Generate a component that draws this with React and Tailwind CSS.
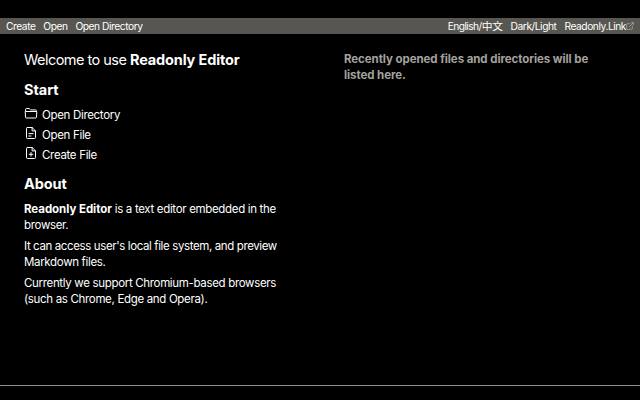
const FolderIcon = () => (
  <svg className="mb-[3px] size-[14px] shrink-0" viewBox="0 0 14 14" fill="none" stroke="currentColor" strokeWidth="1" strokeLinejoin="round">
    <path d="M1.6 4.5V2.4a.9.9 0 0 1 .9-.9h2.6l1.5 1.4h4.9a.9.9 0 0 1 .9.9v.7" />
    <path d="M1.2 4.5h11.6l-.3 5.6a.9.9 0 0 1-.9.9H2.4a.9.9 0 0 1-.9-.9z" />
  </svg>
);

const FileIcon = ({ children }) => (
  <svg className="mb-[4px] size-[14px] shrink-0" viewBox="0 0 14 14" fill="none" stroke="currentColor" strokeWidth="1" strokeLinejoin="round" strokeLinecap="round">
    <path d="M3.4 1.5h4.7l3.4 3.4v6.7a.9.9 0 0 1-.9.9H3.4a.9.9 0 0 1-.9-.9V2.4a.9.9 0 0 1 .9-.9z" />
    <path d="M8.1 1.5v3.4h3.4" />
    {children}
  </svg>
);

const ExternalIcon = () => (
  <svg className="size-[8px] shrink-0 text-[#b5b2ae]" viewBox="0 0 8 8" fill="none" stroke="currentColor" strokeWidth="0.7">
    <path d="M4.3 1.7H1.2a.5.5 0 0 0-.5.5v4.6a.5.5 0 0 0 .5.5h4.6a.5.5 0 0 0 .5-.5V3.7M3 5l4.3-4.3M5 .6h2.4V3" />
  </svg>
);

const Action = ({ icon, children }) => (
  <li className="flex h-5 items-center gap-1">
    {icon}
    <span className="text-[11.5px] leading-5 tracking-[-0.32px]">{children}</span>
  </li>
);

export default function App() {
  return (
    <div className="flex h-[400px] w-[640px] flex-col overflow-hidden bg-black pt-[18px] font-['Inter','Noto_Sans_CJK_SC',sans-serif] whitespace-nowrap text-white">
      <header className="flex h-4 shrink-0 items-center justify-between bg-[#575650] px-1.5 text-[10.25px] leading-4 tracking-[-0.46px]">
        <nav className="flex gap-[7.8px]">
          <span>Create</span>
          <span>Open</span>
          <span>Open Directory</span>
        </nav>
        <nav className="flex gap-2">
          <span className="tracking-[-0.58px]">English/<span className="text-[10.75px] leading-none tracking-[-0.3px]">中文</span></span>
          <span>Dark/Light</span>
          <span className="flex items-center">Readonly.Link<ExternalIcon /></span>
        </nav>
      </header>
      <main className="grid h-[351px] shrink-0 grid-cols-2 px-6 pt-4">
        <section>
          <h1 className="text-[14.5px] leading-5 tracking-[-0.53px]">
            Welcome to use <b className="tracking-[-0.14px]">Readonly Editor</b>
          </h1>
          <h2 className="mt-2.5 text-[14.5px] leading-5 font-bold tracking-[-0.05px]">Start</h2>
          <ul className="mt-[5px]">
            <Action icon={<FolderIcon />}>Open Directory</Action>
            <Action icon={<FileIcon><path d="M4.8 7.6h4.4M4.8 10h2.2" /></FileIcon>}>Open File</Action>
            <Action icon={<FileIcon><path d="M7 6.5v3.6M5.2 8.3h3.6" /></FileIcon>}>Create File</Action>
          </ul>
          <h2 className="mt-[9px] text-[14.5px] leading-5 font-bold tracking-[-0.1px]">About</h2>
          <div className="mt-[7px] flex flex-col gap-[5px] text-[11.5px] leading-4 tracking-[-0.33px]">
            <p><b className="tracking-[-0.05px]">Readonly Editor</b> is a text editor embedded in the<br />browser.</p>
            <p><span className="tracking-[-0.38px]">It can access user's local file system, and preview</span><br />Markdown files.</p>
            <p>Currently we support Chromium-based browsers<br />(such as Chrome, Edge and Opera).</p>
          </div>
        </section>
        <aside className="pt-px pl-6 text-[11.5px] leading-4 font-bold tracking-[-0.07px] text-[#a3a29f]">
          Recently opened files and directories will be<br />listed here.
        </aside>
      </main>
      <footer className="border-t border-[#8c8c8c]" />
    </div>
  );
}
